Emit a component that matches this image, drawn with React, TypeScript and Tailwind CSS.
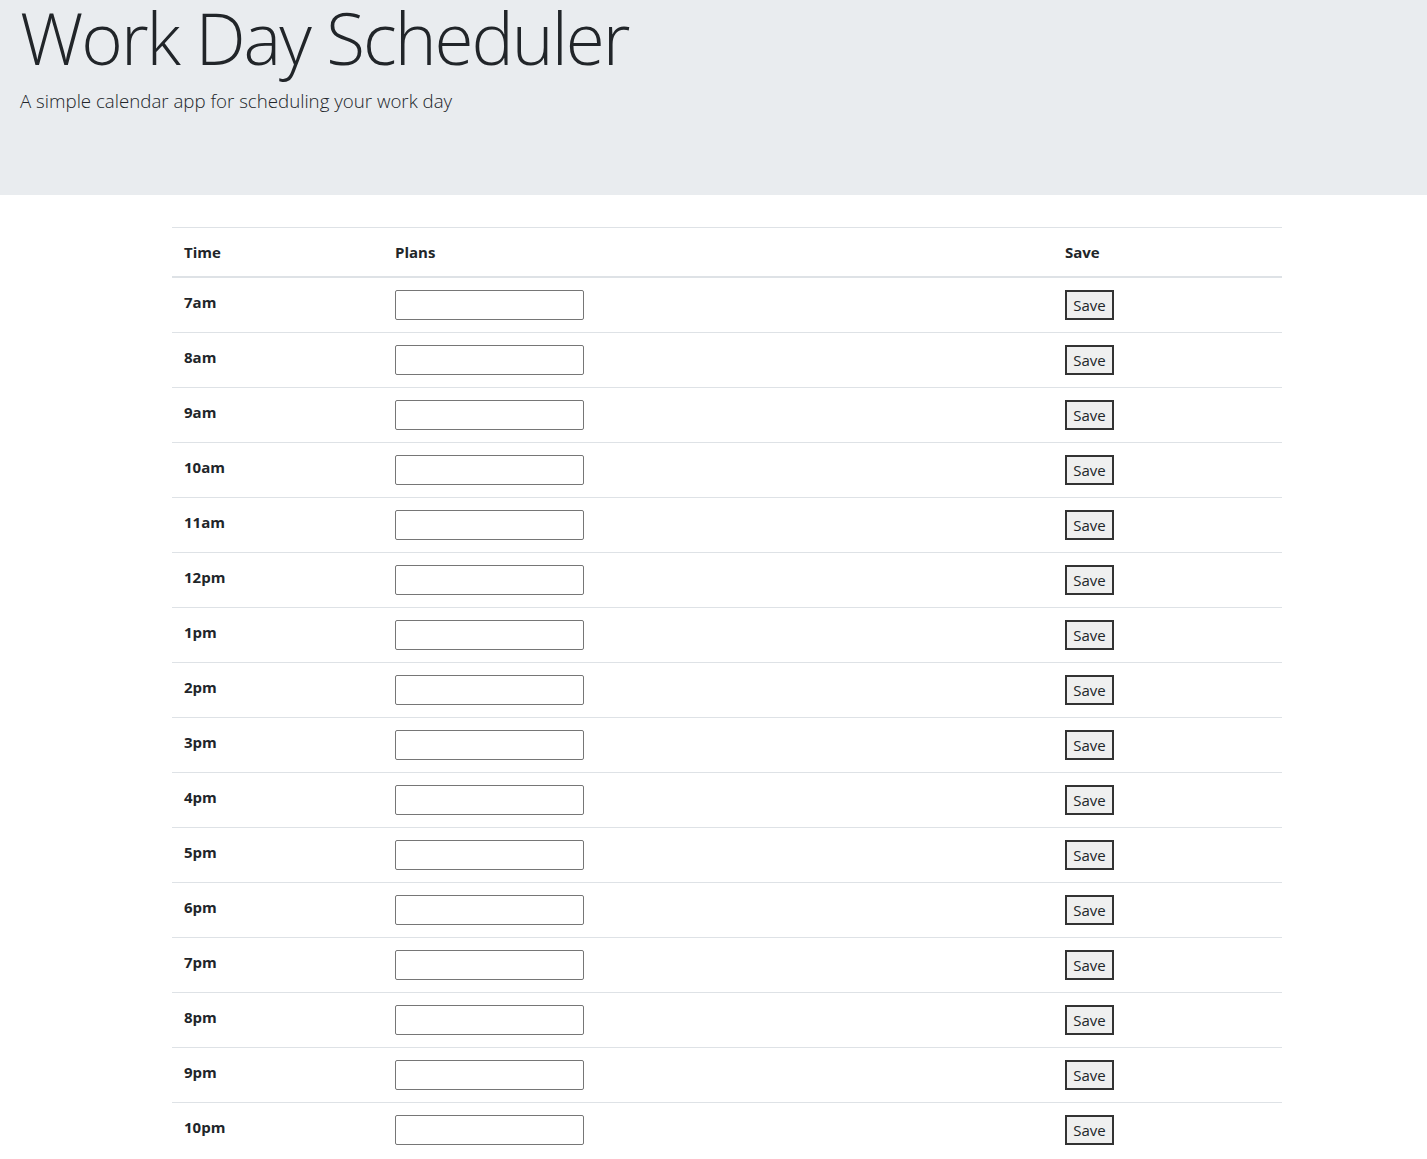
import React from 'react';

const hours = ['7am', '8am', '9am', '10am', '11am', '12pm', '1pm', '2pm', '3pm', '4pm', '5pm', '6pm', '7pm', '8pm', '9pm', '10pm'];

export default function App() {
  return (
    <div className="min-h-screen bg-white text-[#212529] font-['Open_Sans',sans-serif]">
      <header className="h-[195px] bg-[#e9ecef] px-5">
        <h1 className="text-[71px] font-light leading-[75px] tracking-[-2px]">Work Day Scheduler</h1>
        <p className="mt-[12px] text-[18.7px] font-light leading-[28px]">A simple calendar app for scheduling your work day</p>
      </header>

      <div className="ml-[172px] mt-8 w-[1110px]">
        <table className="w-full table-fixed border-collapse text-[15px]">
          <colgroup>
            <col className="w-[211px]" />
            <col className="w-[670px]" />
            <col />
          </colgroup>
          <thead>
            <tr className="border-t border-[#dee2e6]">
              <th className="border-b-2 border-[#dee2e6] p-3 text-left align-bottom font-bold leading-6">Time</th>
              <th className="border-b-2 border-[#dee2e6] p-3 text-left align-bottom font-bold leading-6">Plans</th>
              <th className="border-b-2 border-[#dee2e6] p-3 text-left align-bottom font-bold leading-6">Save</th>
            </tr>
          </thead>
          <tbody>
            {hours.map((hour, i) => (
              <tr key={hour} className={i > 0 ? 'border-t border-[#dee2e6]' : ''}>
                <td className="p-3 align-top font-bold leading-6">{hour}</td>
                <td className="p-3 align-top">
                  <input
                    type="text"
                    className="block h-[30px] w-[189px] rounded-[2px] border border-[#767676] bg-white px-1"
                  />
                </td>
                <td className="p-3 align-top">
                  <button className="h-[30px] w-[49px] border-2 border-[#333] bg-[#efefef] text-[15px] font-normal leading-none">
                    Save
                  </button>
                </td>
              </tr>
            ))}
          </tbody>
        </table>
      </div>
    </div>
  );
}
